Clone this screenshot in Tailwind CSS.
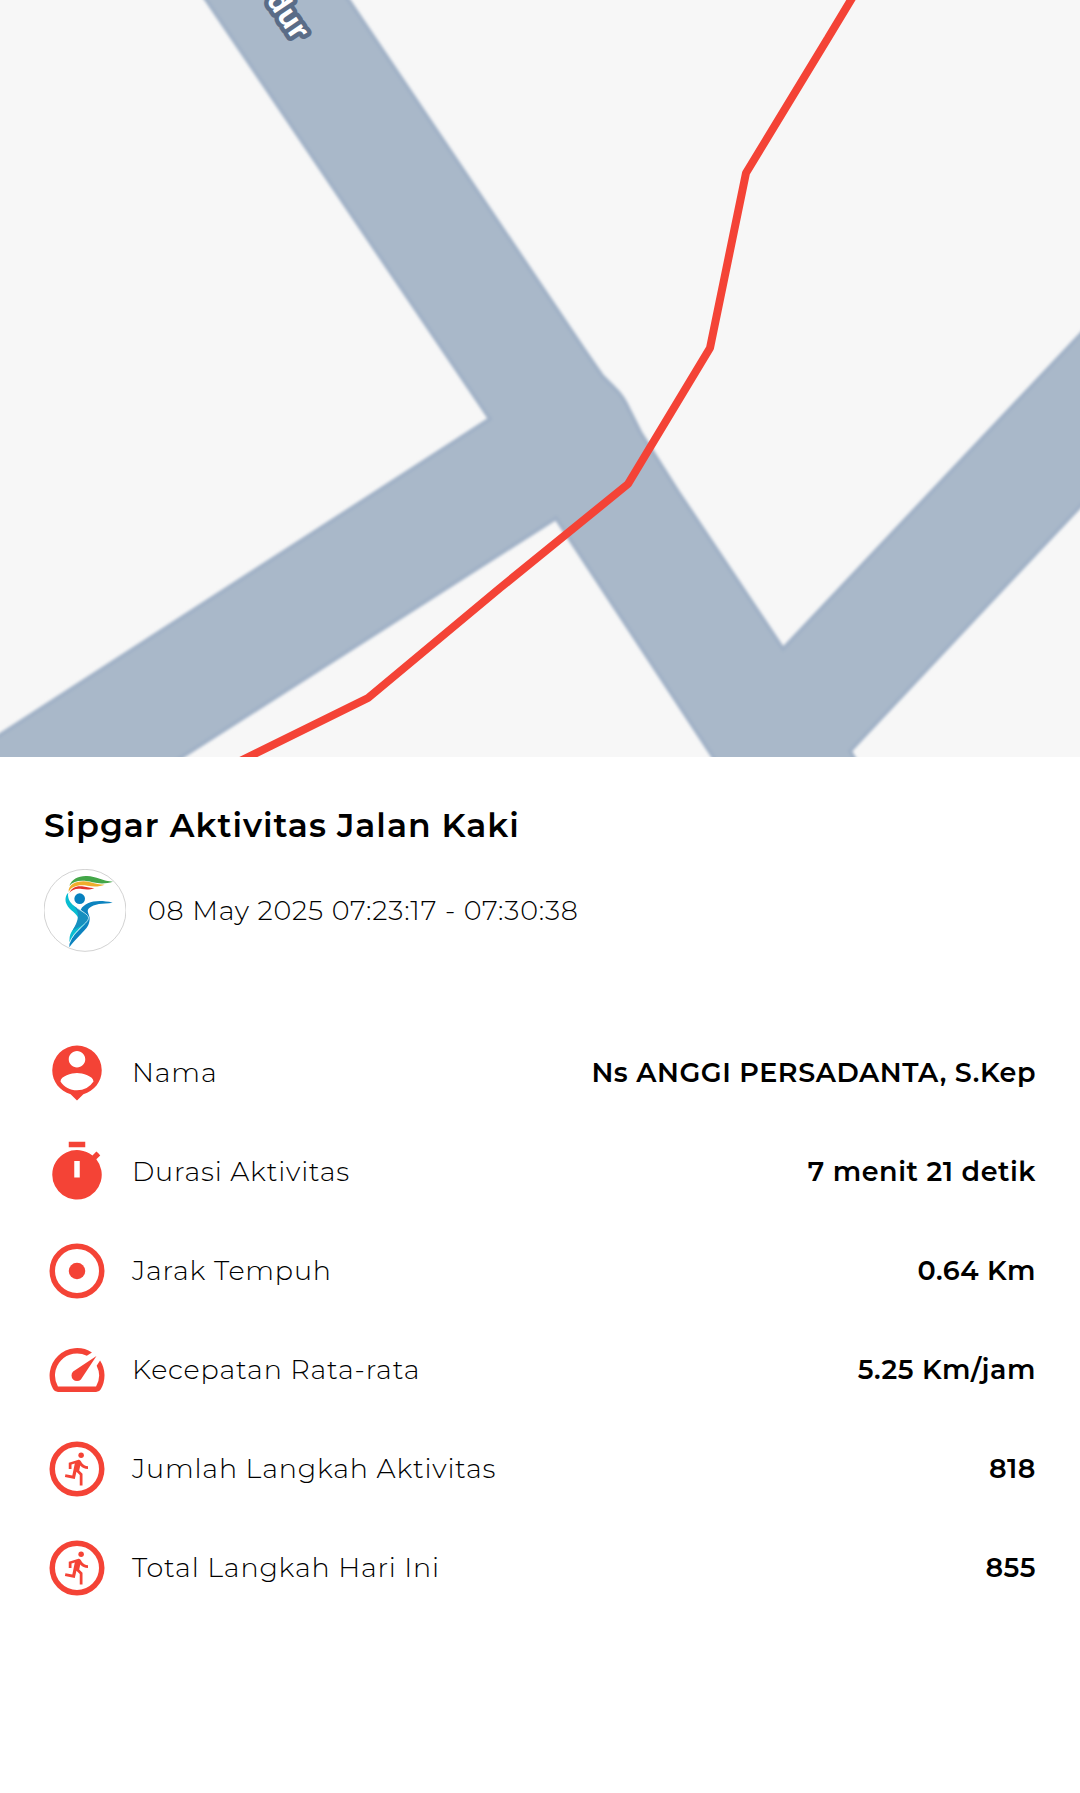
<!DOCTYPE html>
<html lang="id">
<head>
<meta charset="utf-8">
<meta name="viewport" content="width=device-width, initial-scale=1">
<title>Sipgar Aktivitas Jalan Kaki</title>
<script src="https://cdn.jsdelivr.net/npm/@tailwindcss/browser@4"></script>
</head>
<body class="min-h-screen bg-white font-['Montserrat','Inter',sans-serif] text-black">
<svg class="block h-auto w-full bg-[#f7f7f7]" viewBox="0 0 1080 757" role="img" aria-label="Peta rute">
  <defs><filter id="soft" x="-5%" y="-5%" width="110%" height="110%"><feGaussianBlur stdDeviation="1.5"/></filter></defs>
  <!-- roads -->
  <path filter="url(#soft)" fill="#a9b8c9" stroke="#a0b1c6" stroke-width="4" d="M193-20 490 419-20 748V790H130L556 518 735 790H872L850 751 1100 485V314L783 649 678 492 640 432 630 412Q623 396 614 388L602 376 584 350 335-20Z"/>
  <!-- street name -->
  <text transform="translate(294 42) rotate(56)" text-anchor="end" font-family="Open Sans, sans-serif" font-size="29" font-weight="700" fill="#fff" stroke="#5a6c87" stroke-width="9" stroke-linejoin="round" paint-order="stroke">dur</text>
  <!-- walked route -->
  <path fill="none" stroke="#f44336" stroke-width="8" stroke-linejoin="bevel" d="M863-20 828 38 746 173 710 348 628 484 500 588 368 698 226 768"/>
</svg>
<main class="px-11 pt-12">
  <h1 class="text-[33px] leading-10 font-semibold tracking-[0.03em]">Sipgar Aktivitas Jalan Kaki</h1>
  <div class="mt-6 flex items-center gap-[22px]">
    <svg class="h-[83px] w-[82px] shrink-0" viewBox="42 27 246 249" role="img" aria-label="Sipgar">
      <circle cx="165" cy="151" r="123" fill="#fff" stroke="#bbb" stroke-width="2"/>
      <path fill="#43a648" d="M118 77C126 58 144 47 171 48C198 49 220 64 249 65C228 72 207 71 188 67C158 59 132 61 118 77Z"/>
      <path fill="#efad2b" d="M116 96C114 76 135 64 161 64C184 66 200 74 224 74C209 80 191 81 172 77C145 73 124 79 116 96Z"/>
      <path fill="#e23229" d="M118 99C124 84 138 77 156 79C170 81 180 85 193 84C180 90 168 89 156 87C138 84 125 90 118 99Z"/>
      <circle cx="149" cy="116" r="16" fill="#0781bf"/>
      <path fill="#0c83bf" d="M152 149C166 126 198 117 248 128C217 132 193 129 177 145C169 154 176 159 179 173C180 207 154 214 118 262C116 236 143 216 157 199C181 174 171 164 152 149Z"/>
      <path fill="#09bdd1" d="M115 98C106 105 104 121 110 133C118 152 143 160 145 177C145 193 122 210 119 231L118 247C134 213 165 198 175 176C174 158 143 148 128 134C117 123 112 110 115 98Z"/>
      <path fill="#168fbf" d="M128 134C152 155 147 180 127 213C147 199 172 192 175 174C175 160 145 150 128 134Z"/>
      <path fill="none" stroke="#fff" stroke-width="2" d="M140 143C153 154 176 162 176 175C171 194 133 208 118 250"/>
    </svg>
    <p class="text-[27px] leading-8 font-light tracking-[0.03em]">08 May 2025 07:23:17 - 07:30:38</p>
  </div>
  <dl class="mt-[71px]">
    <div class="flex h-[99px] items-center gap-[22px]">
      <svg class="size-[66px] shrink-0 fill-[#f44336]" viewBox="0 0 24 24" aria-hidden="true"><path d="M12 2a9 9 0 0 0-9 9c0 4.170 2.840 7.670 6.690 8.690L12 22l2.310-2.310C18.160 18.670 21 15.170 21 11a9 9 0 0 0-9-9zm0 2c1.660 0 3 1.340 3 3s-1.340 3-3 3-3-1.340-3-3 1.340-3 3-3zm0 14.300c-2.500 0-4.710-1.280-6-3.220.030-1.990 4-3.080 6-3.080s5.970 1.090 6 3.080a7.200 7.200 0 0 1-6 3.220z"/></svg>
      <dt class="grow text-[27px] leading-8 font-light tracking-[0.03em]">Nama</dt><dd class="text-[27px] leading-8 font-semibold tracking-[0.02em]">Ns ANGGI PERSADANTA, S.Kep</dd>
    </div>
    <div class="flex h-[99px] items-center gap-[22px]">
      <svg class="size-[66px] shrink-0 fill-[#f44336]" viewBox="0 0 24 24" aria-hidden="true"><path fill-rule="evenodd" d="M9 1h6v2H9zM19.030 7.390l1.420-1.420c-.43-.51-.9-.99-1.410-1.410l-1.420 1.420A9 9 0 0 0 3 13a9 9 0 1 0 16.030-5.610zM13 14h-2V8h2z"/></svg>
      <dt class="grow text-[27px] leading-8 font-light tracking-[0.03em]">Durasi Aktivitas</dt><dd class="text-[27px] leading-8 font-semibold tracking-[0.02em]">7 menit 21 detik</dd>
    </div>
    <div class="flex h-[99px] items-center gap-[22px]">
      <svg class="size-[66px] shrink-0" viewBox="0 0 24 24" aria-hidden="true"><circle cx="12" cy="12" r="9" fill="none" stroke="#f44336" stroke-width="2"/><circle cx="12" cy="12" r="3" fill="#f44336"/></svg>
      <dt class="grow text-[27px] leading-8 font-light tracking-[0.03em]">Jarak Tempuh</dt><dd class="text-[27px] leading-8 font-semibold tracking-[0.02em]">0.64 Km</dd>
    </div>
    <div class="flex h-[99px] items-center gap-[22px]">
      <svg class="size-[66px] shrink-0 fill-[#f44336]" viewBox="0 0 24 24" aria-hidden="true"><path d="M20.380 8.570l-1.230 1.850a8 8 0 0 1-.22 7.580H5.070A8 8 0 0 1 15.580 6.850l1.850-1.230A10 10 0 0 0 3.350 19a2 2 0 0 0 1.720 1h13.850a2 2 0 0 0 1.740-1 10 10 0 0 0-.27-10.440z"/><path d="M10.590 15.410a2 2 0 0 0 2.830 0l5.660-8.490-8.490 5.660a2 2 0 0 0 0 2.830z"/></svg>
      <dt class="grow text-[27px] leading-8 font-light tracking-[0.03em]">Kecepatan Rata-rata</dt><dd class="text-[27px] leading-8 font-semibold tracking-[0.02em]">5.25 Km/jam</dd>
    </div>
    <div class="flex h-[99px] items-center gap-[22px]">
      <svg class="size-[66px] shrink-0" viewBox="0 0 24 24" aria-hidden="true"><circle cx="12" cy="12" r="9" fill="none" stroke="#f44336" stroke-width="2"/><circle cx="13.500" cy="7" r="1" fill="#f44336"/><path fill="#f44336" d="M9 9.700v2.300h1V10.400l1.200-.4-.9 4.400-2.500-.5-.2 1 3.600.7.600-2.600 1.200 1.200V18h1v-4.300l-1.200-1.200.4-1.800c.6.800 1.600 1.300 2.800 1.300v-1c-1 0-1.700-.5-2.200-1.200-.4-.7-.7-1.300-1.500-1.100z"/></svg>
      <dt class="grow text-[27px] leading-8 font-light tracking-[0.03em]">Jumlah Langkah Aktivitas</dt><dd class="text-[27px] leading-8 font-semibold tracking-[0.02em]">818</dd>
    </div>
    <div class="flex h-[99px] items-center gap-[22px]">
      <svg class="size-[66px] shrink-0" viewBox="0 0 24 24" aria-hidden="true"><circle cx="12" cy="12" r="9" fill="none" stroke="#f44336" stroke-width="2"/><circle cx="13.500" cy="7" r="1" fill="#f44336"/><path fill="#f44336" d="M9 9.700v2.300h1V10.400l1.200-.4-.9 4.400-2.500-.5-.2 1 3.600.7.600-2.600 1.200 1.200V18h1v-4.300l-1.200-1.200.4-1.800c.6.800 1.600 1.300 2.800 1.300v-1c-1 0-1.700-.5-2.200-1.200-.4-.7-.7-1.300-1.500-1.100z"/></svg>
      <dt class="grow text-[27px] leading-8 font-light tracking-[0.03em]">Total Langkah Hari Ini</dt><dd class="text-[27px] leading-8 font-semibold tracking-[0.02em]">855</dd>
    </div>
  </dl>
</main>
</body>
</html>
